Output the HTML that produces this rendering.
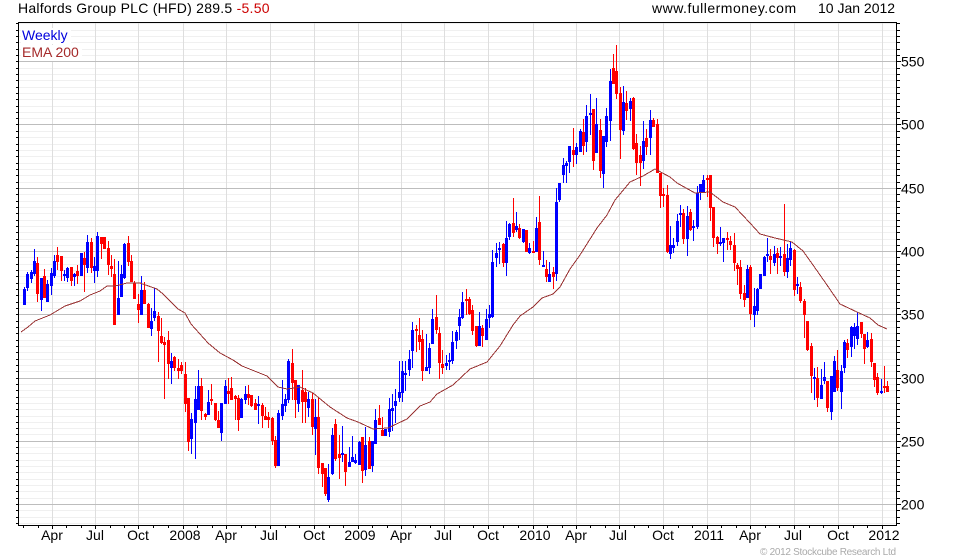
<!DOCTYPE html>
<html><head><meta charset="utf-8"><title>Halfords Group PLC</title>
<style>html,body{margin:0;padding:0;background:#fff}svg{display:block}text{font-family:"Liberation Sans",Arial,sans-serif;font-size:14px;fill:#000}</style>
</head><body>
<svg width="980" height="560" viewBox="0 0 980 560" xmlns="http://www.w3.org/2000/svg">
<defs><path id="h" d="M16 23.5h884M16 30.5h884M16 36.5h884M16 42.5h884M16 49.5h884M16 55.5h884M16 68.5h884M16 74.5h884M16 80.5h884M16 87.5h884M16 93.5h884M16 99.5h884M16 106.5h884M16 112.5h884M16 118.5h884M16 131.5h884M16 137.5h884M16 144.5h884M16 150.5h884M16 156.5h884M16 163.5h884M16 169.5h884M16 175.5h884M16 182.5h884M16 194.5h884M16 201.5h884M16 207.5h884M16 213.5h884M16 220.5h884M16 226.5h884M16 232.5h884M16 239.5h884M16 245.5h884M16 257.5h884M16 264.5h884M16 270.5h884M16 276.5h884M16 283.5h884M16 289.5h884M16 295.5h884M16 302.5h884M16 308.5h884M16 321.5h884M16 327.5h884M16 333.5h884M16 340.5h884M16 346.5h884M16 352.5h884M16 359.5h884M16 365.5h884M16 371.5h884M16 384.5h884M16 390.5h884M16 397.5h884M16 403.5h884M16 409.5h884M16 416.5h884M16 422.5h884M16 428.5h884M16 434.5h884M16 447.5h884M16 453.5h884M16 460.5h884M16 466.5h884M16 472.5h884M16 479.5h884M16 485.5h884M16 491.5h884M16 498.5h884M16 510.5h884M16 517.5h884M16 523.5h884"/>
<path id="m" d="M16 61.5h885M16 124.5h885M16 188.5h885M16 251.5h885M16 314.5h885M16 378.5h885M16 441.5h885M16 504.5h885"/></defs>
<g shape-rendering="crispEdges" fill="none">
<use href="#h" stroke="#000"/><use href="#m" stroke="#000"/>
<rect x="19" y="23" width="877" height="502" fill="#fff"/>
<clipPath id="c"><rect x="19" y="23" width="877" height="502"/></clipPath>
<g clip-path="url(#c)">
<use href="#h" stroke="#f0f0f0"/>
<path stroke="#dedede" d="M52.5 23V525M95.5 23V525M138.5 23V525M183.5 23V525M226.5 23V525M270.5 23V525M314.5 23V525M358.5 23V525M401.5 23V525M444.5 23V525M488.5 23V525M533.5 23V525M576.5 23V525M619.5 23V525M663.5 23V525M707.5 23V525M750.5 23V525M794.5 23V525M838.5 23V525M882.5 23V525"/>
<use href="#m" stroke="#bdbdbd"/>
</g>
<rect x="21" y="28" width="50" height="16" fill="#fff"/><rect x="21" y="45" width="61" height="16" fill="#fff"/>
<path stroke="#000" d="M18.5 22V526M896.5 22V526M18 22.5H897M18 525.5H897"/>
<path stroke="#000" d="M23.5 526v2M38.5 526v2M52.5 526v3M66.5 526v2M81.5 526v2M95.5 526v3M110.5 526v2M124.5 526v2M138.5 526v3M153.5 526v2M168.5 526v2M183.5 526v3M197.5 526v2M212.5 526v2M226.5 526v3M241.5 526v2M255.5 526v2M270.5 526v3M285.5 526v2M299.5 526v2M314.5 526v3M329.5 526v2M343.5 526v2M358.5 526v3M372.5 526v2M387.5 526v2M401.5 526v3M415.5 526v2M430.5 526v2M444.5 526v3M459.5 526v2M473.5 526v2M488.5 526v3M503.5 526v2M518.5 526v2M533.5 526v3M547.5 526v2M562.5 526v2M576.5 526v3M590.5 526v2M605.5 526v2M619.5 526v3M634.5 526v2M648.5 526v2M663.5 526v3M678.5 526v2M692.5 526v2M707.5 526v3M721.5 526v2M736.5 526v2M750.5 526v3M765.5 526v2M779.5 526v2M794.5 526v3M809.5 526v2M823.5 526v2M838.5 526v3M853.5 526v2M867.5 526v2M882.5 526v3"/>
<!-- blue wicks -->
<path stroke="#0000ff" d="M24.5 287V305M27.5 272V291M31.5 270V283M34.5 249V276M41.5 278V311M47.5 280V302M51.5 268V295M54.5 255V278M64.5 270V281M67.5 267V282M74.5 273V286M81.5 253V276M87.5 235V273M94.5 257V283M97.5 232V277M118.5 261V315M121.5 265V297M124.5 243V279M141.5 276V315M151.5 308V336M154.5 288V321M171.5 353V384M191.5 413V454M195.5 386V459M198.5 370V410M208.5 390V415M221.5 403V441M225.5 380V404M241.5 398V418M245.5 386V404M258.5 396V424M278.5 410V466M282.5 380V420M285.5 394V412M288.5 359V403M298.5 385V412M308.5 392V417M315.5 399V455M328.5 464V502M332.5 428V475M342.5 426V462M349.5 447V467M352.5 436V462M355.5 454V464M359.5 441V465M365.5 427V476M372.5 441V472M375.5 409V444M385.5 429V436M389.5 398V437M392.5 394V431M395.5 389V423M399.5 361V402M402.5 361V402M405.5 361V391M409.5 350V376M412.5 322V368M426.5 334V371M429.5 343V374M432.5 309V344M446.5 355V370M449.5 353V370M452.5 331V364M456.5 330V349M459.5 309V340M462.5 292V319M479.5 312V346M486.5 309V340M489.5 305V328M492.5 250V318M496.5 243V267M499.5 242V264M506.5 221V276M509.5 223V240M516.5 212V232M523.5 229V243M529.5 243V254M536.5 217V252M543.5 251V267M549.5 262V282M556.5 188V281M559.5 183V202M563.5 158V183M566.5 161V183M569.5 146V173M576.5 143V164M580.5 129V152M586.5 105V152M590.5 94V135M596.5 98V153M603.5 136V188M606.5 108V147M610.5 69V141M623.5 86V135M630.5 98V121M643.5 121V169M650.5 110V155M670.5 226V259M673.5 238V253M677.5 214V246M680.5 205V227M687.5 206V256M693.5 220V241M697.5 186V229M700.5 184V200M703.5 175V193M720.5 227V246M723.5 238V262M747.5 265V298M754.5 288V327M757.5 288V315M760.5 274V289M764.5 256V276M767.5 238V262M774.5 246V266M780.5 247V266M787.5 244V278M790.5 242V266M797.5 277V294M814.5 368V400M821.5 369V399M824.5 362V384M831.5 376V420M834.5 356V392M841.5 365V409M844.5 340V373M851.5 326V357M854.5 323V349M857.5 312V345M867.5 332V348M881.5 379V394"/>
<!-- blue bodies -->
<path stroke="#0000ff" stroke-width="3" d="M24.5 289V305M27.5 274V288M31.5 272V279M34.5 261V274M41.5 278V300M47.5 284V302M51.5 273V286M54.5 261V276M64.5 274V276M67.5 268V278M74.5 274V277M81.5 253V276M87.5 242V268M94.5 266V271M97.5 236V271M118.5 298V315M121.5 274V297M124.5 244V278M141.5 290V315M151.5 321V329M154.5 311V318M171.5 361V368M191.5 419V439M195.5 399V423M198.5 386V410M208.5 402V415M221.5 403V433M225.5 386V404M241.5 399V418M245.5 394V400M258.5 404V406M278.5 413V466M282.5 404V416M285.5 399V406M288.5 361V400M298.5 385V404M308.5 399V408M315.5 417V429M328.5 477V500M332.5 435V474M342.5 453V455M349.5 462V467M352.5 457V462M355.5 460V463M359.5 442V465M365.5 445V470M372.5 441V466M375.5 420V444M385.5 429V436M389.5 409V432M392.5 408V411M395.5 401V406M399.5 392V398M402.5 371V393M405.5 373V375M409.5 359V370M412.5 330V351M426.5 367V371M429.5 348V368M432.5 319V344M446.5 363V366M449.5 360V362M452.5 342V361M456.5 332V341M459.5 317V326M462.5 302V318M479.5 326V346M486.5 319V340M489.5 314V318M492.5 262V317M496.5 253V258M499.5 248V250M506.5 238V263M509.5 224V237M516.5 226V230M523.5 229V242M529.5 248V253M536.5 228V252M543.5 265V267M549.5 274V282M556.5 202V274M559.5 183V200M563.5 165V175M566.5 163V166M569.5 146V162M576.5 147V155M580.5 131V152M586.5 116V142M590.5 113V115M596.5 124V153M603.5 136V174M606.5 116V142M610.5 81V121M623.5 102V131M630.5 101V109M643.5 141V161M650.5 120V138M670.5 245V254M673.5 245V248M677.5 221V242M680.5 213V215M687.5 216V239M693.5 226V228M697.5 193V227M700.5 184V193M703.5 180V193M720.5 242V244M723.5 238V243M747.5 269V298M754.5 306V315M757.5 289V311M760.5 274V289M764.5 257V276M767.5 254V256M774.5 254V263M780.5 256V258M787.5 258V272M790.5 248V260M797.5 284V286M814.5 377V379M821.5 385V399M824.5 377V381M831.5 376V412M834.5 361V392M841.5 371V392M844.5 342V368M851.5 327V347M854.5 327V336M857.5 326V339M867.5 340V347M881.5 391V393"/>
<!-- red wicks -->
<path stroke="#ff0000" d="M37.5 257V302M44.5 269V298M57.5 247V270M61.5 256V281M71.5 267V286M77.5 265V284M84.5 252V292M91.5 238V273M101.5 237V259M104.5 237V249M108.5 241V275M111.5 255V277M114.5 259V325M128.5 236V266M131.5 255V282M134.5 281V299M138.5 294V323M144.5 282V304M148.5 303V328M158.5 312V362M161.5 318V344M164.5 337V399M168.5 331V379M174.5 356V371M178.5 359V379M181.5 362V374M185.5 362V412M188.5 398V451M201.5 378V420M205.5 413V420M211.5 384V405M215.5 403V421M218.5 411V428M228.5 378V404M231.5 377V400M235.5 395V420M238.5 395V431M248.5 385V405M251.5 395V407M255.5 399V410M262.5 403V428M265.5 407V420M268.5 412V428M272.5 417V445M275.5 436V468M292.5 349V400M295.5 380V418M302.5 370V423M305.5 388V423M312.5 393V435M318.5 397V474M322.5 463V487M325.5 468V496M335.5 419V461M339.5 435V479M345.5 454V486M362.5 437V483M369.5 437V469M379.5 405V425M382.5 417V436M416.5 325V352M419.5 318V350M422.5 330V381M436.5 295V334M439.5 327V379M442.5 350V374M466.5 289V315M469.5 297V315M472.5 305V335M476.5 326V347M482.5 325V347M503.5 243V267M513.5 198V237M519.5 224V239M526.5 230V252M533.5 241V253M539.5 196V265M546.5 260V282M553.5 267V289M573.5 128V167M583.5 119V155M593.5 109V170M600.5 119V178M613.5 54V84M616.5 45V99M620.5 87V159M626.5 91V120M633.5 97V150M636.5 134V175M640.5 146V186M646.5 129V155M653.5 118V127M657.5 119V173M660.5 173V208M663.5 188V207M667.5 185V253M683.5 209V244M690.5 209V231M707.5 175V197M710.5 175V221M713.5 207V247M717.5 236V254M727.5 232V250M730.5 236V250M734.5 233V271M737.5 263V285M740.5 260V299M744.5 285V307M750.5 265V320M770.5 249V274M777.5 248V274M784.5 204V276M794.5 249V296M800.5 282V303M804.5 299V338M807.5 321V351M811.5 343V393M817.5 367V407M827.5 381V412M837.5 350V391M847.5 339V358M861.5 322V338M864.5 334V364M871.5 333V367M874.5 363V387M877.5 373V395M884.5 366V393M887.5 381V392"/>
<!-- red bodies -->
<path stroke="#ff0000" stroke-width="3" d="M37.5 263V294M44.5 276V298M57.5 255V262M61.5 256V271M71.5 267V281M77.5 271V276M84.5 258V265M91.5 242V268M101.5 237V244M104.5 237V249M108.5 248V265M111.5 266V269M114.5 274V325M128.5 243V262M131.5 261V282M134.5 283V299M138.5 304V310M144.5 290V304M148.5 304V328M158.5 316V331M161.5 336V343M164.5 342V345M168.5 340V364M174.5 357V368M178.5 368V371M181.5 365V371M185.5 374V404M188.5 398V442M201.5 386V411M205.5 414V417M211.5 399V401M215.5 403V420M218.5 420V428M228.5 391V394M231.5 388V400M235.5 396V399M238.5 398V420M248.5 394V398M251.5 395V406M255.5 403V410M262.5 405V416M265.5 416V420M268.5 417V420M272.5 418V441M275.5 440V466M292.5 363V383M295.5 380V400M302.5 390V402M305.5 392V402M312.5 399V427M318.5 417V468M322.5 463V474M325.5 468V494M335.5 424V459M339.5 454V458M345.5 454V472M362.5 437V471M369.5 441V469M379.5 418V425M382.5 430V436M416.5 329V331M419.5 335V342M422.5 339V371M436.5 317V330M439.5 333V363M442.5 364V368M466.5 299V301M469.5 299V314M472.5 310V331M476.5 326V346M482.5 328V336M503.5 244V263M513.5 223V233M519.5 228V238M526.5 230V252M533.5 251V253M539.5 222V260M546.5 269V277M553.5 272V277M573.5 150V155M583.5 132V146M593.5 109V161M600.5 130V171M613.5 68V84M616.5 71V94M620.5 93V130M626.5 103V111M633.5 98V149M636.5 143V163M640.5 155V163M646.5 138V147M653.5 120V127M657.5 124V173M660.5 173V196M663.5 194V196M667.5 195V252M683.5 213V239M690.5 212V230M707.5 178V180M710.5 175V208M713.5 207V238M717.5 237V244M727.5 238V240M730.5 241V245M734.5 245V263M737.5 265V269M740.5 267V294M744.5 293V300M750.5 267V314M770.5 256V260M777.5 253V258M784.5 254V272M794.5 250V290M800.5 287V301M804.5 301V315M807.5 321V350M811.5 346V376M817.5 378V398M827.5 381V408M837.5 370V388M847.5 343V350M861.5 322V334M864.5 334V349M871.5 339V362M874.5 363V380M877.5 377V393M884.5 386V388M887.5 386V392"/>
</g>
<path fill="none" stroke="#993333" stroke-width="1" shape-rendering="crispEdges" d="M21 332L28 327L35 321L50 315L65 306L80 301L90 295L100 291L107 286L115 286L127 283L140 283L157 289L163 294L178 309L185 313L191 324L208 343L220 353L233 360L242 366L252 370L267 376L278 387L287 389L300 387L313 393L330 407L347 418L358 422L373 429L388 428L407 419L420 406L430 402L437 394L453 385L470 369L487 362L500 346L513 325L520 316L533 307L542 298L553 294L560 287L570 269L580 255L597 228L607 215L615 200L630 182L643 176L655 169L670 177L677 183L695 193L710 192L723 202L735 207L750 223L760 234L775 238L792 242L803 251L813 265L827 285L840 304L857 312L870 318L878 325L887 329"/>
<text x="18" y="13" letter-spacing=".25">Halfords Group PLC (HFD) 289.5 <tspan fill="#cc0000" style="fill:#cc0000">-5.50</tspan></text>
<text x="652" y="13" letter-spacing=".5">www.fullermoney.com</text>
<text x="818" y="13">10 Jan 2012</text>
<text x="22" y="40" style="fill:#0000dd">Weekly</text>
<text x="22" y="57" style="fill:#a52a2a">EMA 200</text>
<text x="901" y="66.5">550</text><text x="901" y="129.5">500</text><text x="901" y="193.5">450</text><text x="901" y="256.5">400</text><text x="901" y="319.5">350</text><text x="901" y="383.5">300</text><text x="901" y="446.5">250</text><text x="901" y="509.5">200</text>
<g text-anchor="middle">
<text x="52" y="540">Apr</text><text x="95" y="540">Jul</text><text x="138" y="540">Oct</text><text x="185" y="540">2008</text><text x="226" y="540">Apr</text><text x="269" y="540">Jul</text><text x="314" y="540">Oct</text><text x="360" y="540">2009</text><text x="401" y="540">Apr</text><text x="443" y="540">Jul</text><text x="488" y="540">Oct</text><text x="535" y="540">2010</text><text x="576" y="540">Apr</text><text x="618" y="540">Jul</text><text x="663" y="540">Oct</text><text x="709" y="540">2011</text><text x="750" y="540">Apr</text><text x="793" y="540">Jul</text><text x="838" y="540">Oct</text><text x="884" y="540">2012</text>
</g>
<text x="760" y="555" textLength="136" lengthAdjust="spacing" style="font-size:10px;fill:#aaaaaa">© 2012 Stockcube Research Ltd</text>
</svg>
</body></html>
